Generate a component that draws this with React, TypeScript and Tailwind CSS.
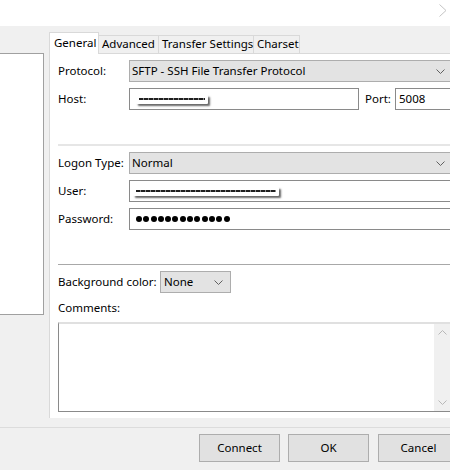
import React from "react";

const Chevron = ({ className = "" }: { className?: string }) => (
  <svg width="9" height="5" viewBox="0 0 9 5" className={className}>
    <polyline points="0.5,0.5 4.5,4.5 8.5,0.5" fill="none" stroke="#606060" strokeWidth="1" />
  </svg>
);

const Blur = ({ w }: { w: number }) => (
  <div
    className="h-[9px] bg-white rounded-[1px] flex items-center px-[3px] shadow-[2px_2px_2px_rgba(0,0,0,0.6)]"
    style={{ width: w }}
  >
    <div className="w-full h-[2px] bg-[repeating-linear-gradient(90deg,#1f1f1f_0_4px,#8a8a8a_4px_5px)]" />
  </div>
);

const btn =
  "w-[81px] h-[28px] shrink-0 bg-[#e1e1e1] border border-[#adadad] flex items-center justify-center";

export default function App() {
  return (
    <div
      className="w-[450px] h-[470px] overflow-hidden bg-[#f0f0f0] flex flex-col text-[11.5px] text-black leading-none whitespace-nowrap"
      style={{ fontFamily: '"Noto Sans", "Open Sans", sans-serif' }}
    >
      {/* title strip */}
      <div className="h-[26px] bg-white flex justify-end pr-[3px] pt-[4px] shrink-0">
        <svg width="8" height="13" viewBox="0 0 8 13">
          <polyline points="0.5,0.5 7,6.5 0.5,12.5" fill="none" stroke="#c4c4c4" strokeWidth="1" />
        </svg>
      </div>

      {/* middle */}
      <div className="h-[401px] flex shrink-0">
        <div className="w-[44px] mt-[27px] h-[262px] bg-white border-t border-r border-b border-[#a0a0a0] shrink-0" />
        <div className="ml-[5px] w-[420px] shrink-0 flex flex-col pt-[6px]">
          {/* tabs */}
          <div className="flex items-end h-[21px] relative z-10">
            <div className="w-[50px] h-[22px] -mb-px shrink-0 bg-white border-t border-l border-r border-[#d9d9d9] pl-[4px] pt-[4px]">
              General
            </div>
            <div className="w-[60px] h-[18px] shrink-0 border-t border-r border-[#d9d9d9] pl-[3px] pt-[2px]">Advanced</div>
            <div className="w-[95px] h-[18px] shrink-0 border-t border-r border-[#d9d9d9] pl-[3px] pt-[2px]">Transfer Settings</div>
            <div className="w-[46px] h-[18px] shrink-0 border-t border-r border-[#d9d9d9] pl-[3px] pt-[2px]">Charset</div>
          </div>
          {/* page */}
          <div className="h-[365px] bg-white border-l border-t border-[#d9d9d9] pl-[8px] flex flex-col">
            {/* Protocol */}
            <div className="mt-[6px] flex items-center h-[22px]">
              <div className="w-[71px] shrink-0">Protocol:</div>
              <div className="w-[323px] shrink-0 h-[22px] bg-[#e3e3e3] border border-[#adadad] flex items-center justify-between pl-[2px] pr-[6px]">
                <span>SFTP - SSH File Transfer Protocol</span>
                <Chevron />
              </div>
            </div>
            {/* Host */}
            <div className="mt-[6px] flex items-center h-[22px]">
              <div className="w-[71px] shrink-0">Host:</div>
              <div className="w-[230px] shrink-0 h-[22px] border border-[#8a8a8a] flex items-center pl-[6px]">
                <Blur w={72} />
              </div>
              <div className="w-[36px] shrink-0 pl-[6px]">Port:</div>
              <div className="w-[60px] shrink-0 h-[22px] border border-[#8a8a8a] flex items-center pl-[3px]">5008</div>
            </div>
            {/* separator */}
            <div className="mt-[34px] h-[2px] bg-[#e6e6e6]" />
            {/* Logon type */}
            <div className="mt-[6px] flex items-center h-[22px]">
              <div className="w-[71px] shrink-0">Logon Type:</div>
              <div className="w-[323px] shrink-0 h-[22px] bg-[#e3e3e3] border border-[#adadad] flex items-center justify-between pl-[2px] pr-[6px]">
                <span>Normal</span>
                <Chevron />
              </div>
            </div>
            {/* User */}
            <div className="mt-[6px] flex items-center h-[22px]">
              <div className="w-[71px] shrink-0">User:</div>
              <div className="w-[323px] shrink-0 h-[22px] border border-[#8a8a8a] flex items-center pl-[3px]">
                <Blur w={146} />
              </div>
            </div>
            {/* Password */}
            <div className="mt-[6px] flex items-center h-[22px]">
              <div className="w-[71px] shrink-0">Password:</div>
              <div className="w-[323px] shrink-0 h-[22px] border border-[#8a8a8a] flex items-center pl-[6px] gap-[1.3px]">
                {Array.from({ length: 13 }).map((_, i) => (
                  <div key={i} className="w-[6px] h-[6px] shrink-0 rounded-full bg-black" />
                ))}
              </div>
            </div>
            {/* separator */}
            <div className="mt-[34px] h-px bg-[#a8a8a8]" />
            {/* Background color */}
            <div className="mt-[6px] flex items-center h-[22px]">
              <div className="w-[102px] shrink-0">Background color:</div>
              <div className="w-[71px] shrink-0 h-[22px] bg-[#e3e3e3] border border-[#adadad] flex items-center justify-between pl-[3px] pr-[7px]">
                <span>None</span>
                <Chevron />
              </div>
            </div>
            <div className="mt-[9px] h-[14px]">Comments:</div>
            {/* textarea */}
            <div className="mt-[6px] w-[394px] h-[90px] border border-[#8a8a8a] border-t-2 border-t-[#e0e0e0] flex justify-end">
              <div className="w-[17px] h-full bg-[#f0f0f0] flex flex-col items-center justify-between py-[6px]">
                <svg width="9" height="5" viewBox="0 0 9 5">
                  <polyline points="0.5,4.5 4.5,0.5 8.5,4.5" fill="none" stroke="#b8b8b8" strokeWidth="1" />
                </svg>
                <svg width="9" height="5" viewBox="0 0 9 5">
                  <polyline points="0.5,0.5 4.5,4.5 8.5,0.5" fill="none" stroke="#b8b8b8" strokeWidth="1" />
                </svg>
              </div>
            </div>
          </div>
        </div>
      </div>

      {/* bottom */}
      <div className="flex-1 border-t border-[#dcdcdc] flex items-start pt-[6px] pl-[199px]">
        <div className={btn}>Connect</div>
        <div className={"ml-[8px] " + btn}>OK</div>
        <div className={"ml-[9px] " + btn}>Cancel</div>
      </div>
    </div>
  );
}
